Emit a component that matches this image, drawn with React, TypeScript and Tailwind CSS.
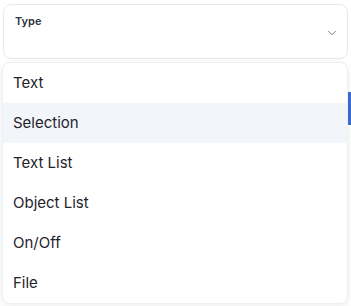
import { ChevronDown } from "lucide-react";

const options = ["Text", "Selection", "Text List", "Object List", "On/Off", "File"];

export default function App() {
  return (
    <div
      className="relative h-[306px] w-[351px] overflow-hidden bg-white"
      style={{ fontFamily: "Inter, 'Noto Sans', sans-serif" }}
    >
      <div className="px-[3px] pt-[4px]">
        <div className="flex h-[55px] justify-between rounded-lg border border-[#e6e8ec] bg-white pl-[11px] pr-[8px] pt-[8px]">
          <span className="text-[11px] font-semibold text-[#2d3340]">Type</span>
          <ChevronDown
            className="mt-[13px] size-[14px] text-[#6b7280]"
            strokeWidth={1.5}
          />
        </div>
        <div className="mt-[12px] h-px bg-[#d1d5db]" />
        <div className="mt-[20px] flex justify-end">
          <div className="-mr-[40px] h-[33px] w-[47px] rounded bg-[#3b6fd6]" />
        </div>
      </div>

      {/* open menu */}
      <ul className="absolute left-[2px] top-[62px] w-[346px] overflow-hidden rounded-lg border border-[#eef0f3] bg-white shadow-[0_2px_8px_rgba(0,0,0,0.08)]">
        {options.map((option) => (
          <li
            key={option}
            className={`flex h-[40px] items-center px-[10px] text-[15px] text-[#1f232b] ${
              option === "Selection" ? "bg-[#f2f5fa]" : ""
            }`}
          >
            {option}
          </li>
        ))}
      </ul>
    </div>
  );
}
